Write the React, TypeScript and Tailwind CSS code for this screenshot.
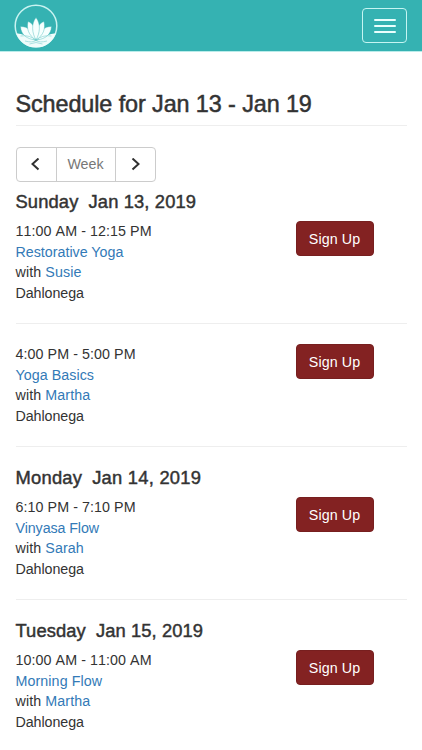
type Session = {
  day?: string;
  date?: string;
  dayClass?: string;
  time: string;
  timeClass: string;
  title: string;
  titleClass: string;
  teacher: string;
};

const sessions: Session[] = [
  { day: 'Sunday', date: 'Jan 13, 2019', dayClass: 'tracking-[0.13px]', time: '11:00 AM - 12:15 PM', timeClass: 'tracking-[0.07px]', title: 'Restorative Yoga', titleClass: 'tracking-normal', teacher: 'Susie' },
  { time: '4:00 PM - 5:00 PM', timeClass: 'tracking-[0.07px]', title: 'Yoga Basics', titleClass: 'tracking-[0.05px]', teacher: 'Martha' },
  { day: 'Monday', date: 'Jan 14, 2019', dayClass: 'tracking-[0.24px]', time: '6:10 PM - 7:10 PM', timeClass: 'tracking-[0.07px]', title: 'Vinyasa Flow', titleClass: 'tracking-[-0.09px]', teacher: 'Sarah' },
  { day: 'Tuesday', date: 'Jan 15, 2019', dayClass: 'tracking-[0.1px]', time: '10:00 AM - 11:00 AM', timeClass: 'tracking-[0.07px]', title: 'Morning Flow', titleClass: 'tracking-[0.09px]', teacher: 'Martha' },
];

function Logo() {
  return (
    <svg width="44" height="44" viewBox="0 0 44 44" fill="none">
      <circle cx="22" cy="22" r="20.8" stroke="#c9f3f1" strokeWidth="1.5" />
      <path d="M2.2 29.5Q6 29 10 31Q17 34 22 37Q27 34 34 31Q38 29 41.8 29.5A21 21 0 0 1 2.2 29.5Z" fill="#f0fcfb" />
      <g fill="#f6fffe" stroke="#35b2b2" strokeWidth=".4">
        <path d="M6.5 22.5C14 22.5 19 27 21.5 36C13 35 7 31 6.5 22.5Z" />
        <path d="M37.5 22.5C30 22.5 25 27 22.5 36C31 35 37 31 37.5 22.5Z" />
        <path d="M14 17.5C19 19 22 25 22 36C14 31 12.5 24 14 17.5Z" />
        <path d="M30 17.5C25 19 22 25 22 36C30 31 31.5 24 30 17.5Z" />
        <path d="M22 13.5C27 20 26 29 22 36C18 29 17 20 22 13.5Z" />
      </g>
      <path d="M6.5 32Q16 30.5 22 36.5Q28 30.5 37.5 32M11 37Q18 39 22 36.5Q26 39 33 37" stroke="#8ed6d6" strokeWidth=".7" />
      <path d="M15.5 40Q22 37 28.5 40" stroke="#8ed6d6" strokeWidth=".7" />
    </svg>
  );
}

function Chevron({ right = false }: { right?: boolean }) {
  return (
    <svg width="10" height="14" viewBox="0 0 10 14" fill="none" stroke="#303030" strokeWidth="2">
      <path d={right ? 'M2.5 .5L8.5 6L2.5 11.5' : 'M7.5 .5L1.5 6L7.5 11.5'} />
    </svg>
  );
}

function SessionBlock({ session }: { session: Session }) {
  return (
    <section>
      {session.day && (
        <h2 className={`flex h-[30px] gap-[10px] pt-px text-[18.35px] leading-[20px] whitespace-nowrap text-[#333] [-webkit-text-stroke:0.45px_#333] ${session.dayClass}`}>
          <span>{session.day}</span>
          <span>{session.date}</span>
        </h2>
      )}
      <div className="flex justify-between">
        <div className="h-[82px] pt-[0.3px] text-[14.27px] leading-[20.4px] whitespace-nowrap text-[#333]">
          <div className={`[font-kerning:none] ${session.timeClass}`}>{session.time}</div>
          <div className={session.titleClass}>
            <a className="text-[#337ab7]">{session.title}</a>
          </div>
          <div className="tracking-[0.09px]">
            with <a className="text-[#337ab7]">{session.teacher}</a>
          </div>
          <div className="tracking-[-0.06px]">Dahlonega</div>
        </div>
        <button className="mr-[33px] h-[35px] w-[78px] rounded-[4px] border border-[#771f1f] bg-[#832222] pt-[2px] text-[14.27px] tracking-[0.1px] text-white">Sign Up</button>
      </div>
    </section>
  );
}

export default function App() {
  return (
    <div className="h-[750px] w-full overflow-hidden bg-white font-['Liberation_Sans',Arial,sans-serif]">
      <header className="flex h-[52px] items-center justify-between border-b border-[#b9ecea] bg-[#35b2b2] pr-[15px] pl-[14px]">
        <Logo />
        <button className="flex h-[35px] w-[45px] flex-col items-center justify-center gap-[4px] rounded-[4px] border border-[#c5f5f2] pt-px">
          <span className="h-[2px] w-[22px] rounded-[1px] bg-[#eafffd]" />
          <span className="h-[2px] w-[22px] rounded-[1px] bg-[#eafffd]" />
          <span className="h-[2px] w-[22px] rounded-[1px] bg-[#eafffd]" />
        </button>
      </header>
      <main className="px-[15.5px] pt-[40px]">
        <h1 className="h-[34px] border-b border-[#eee] text-[23.4px] leading-[25px] tracking-[-0.1px] whitespace-nowrap text-[#333] [-webkit-text-stroke:0.5px_#333]">Schedule for Jan 13 - Jan 19</h1>
        <div className="mt-[21px] flex h-[35px] w-[140px] rounded-[4px] border border-[#ccc] text-[14.27px]">
          <button className="flex w-[40px] items-center justify-center border-r border-[#ccc]"><Chevron /></button>
          <span className="flex flex-1 items-center justify-center text-[#777]">Week</span>
          <button className="flex w-[40px] items-center justify-center border-l border-[#ccc]"><Chevron right /></button>
        </div>
        <div className="mt-[9px]">
          {sessions.map((session, i) => (
            <div key={session.title}>
              {i > 0 && <hr className="my-[20px] border-[#eee]" />}
              <SessionBlock session={session} />
            </div>
          ))}
        </div>
      </main>
    </div>
  );
}
